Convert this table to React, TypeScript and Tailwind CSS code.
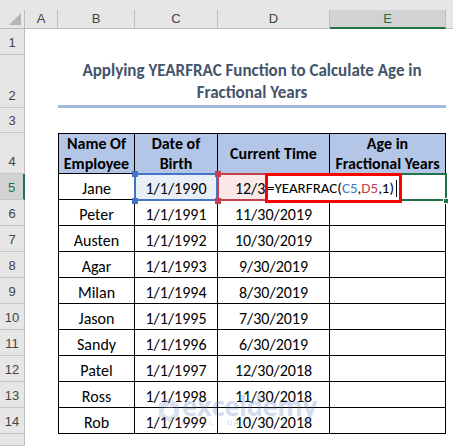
import React from 'react';

const people = [
  ['Jane', '1/1/1990', '12/30/2019'],
  ['Peter', '1/1/1991', '11/30/2019'],
  ['Austen', '1/1/1992', '10/30/2019'],
  ['Agar', '1/1/1993', '9/30/2019'],
  ['Milan', '1/1/1994', '8/30/2019'],
  ['Jason', '1/1/1995', '7/30/2019'],
  ['Sandy', '1/1/1996', '6/30/2019'],
  ['Patel', '1/1/1997', '12/30/2018'],
  ['Ross', '1/1/1998', '11/30/2018'],
  ['Rob', '1/1/1999', '10/30/2018'],
];

const letters = ['A', 'B', 'C', 'D', 'E'];

const RowHead = ({ n, active }: { n?: number; active?: boolean }) => (
  <div
    className={`flex items-end justify-center border-b border-[#c6c6c6] pb-[3px] text-[13px] leading-4 font-['Liberation_Sans',sans-serif] ${
      active
        ? 'bg-[#d2d2d2] text-[#217346] border-r-2 border-r-[#217346]'
        : 'bg-[#e6e6e6] text-[#444] border-r border-r-[#bdbdbd]'
    }`}
  >
    {n}
  </div>
);

const Blank = () => <div className="bg-white" />;

const Cell = ({
  children,
  first,
  top,
  className = '',
}: {
  children?: React.ReactNode;
  first?: boolean;
  top?: boolean;
  className?: string;
}) => (
  <div
    className={`flex items-end justify-center border-r border-b border-black whitespace-nowrap overflow-hidden leading-5 ${
      first ? 'border-l' : ''
    } ${top ? 'border-t' : ''} ${className}`}
  >
    {children}
  </div>
);

const Handle = ({ className }: { className: string }) => (
  <div className={`absolute w-[6px] h-[6px] ${className}`} />
);

export default function App() {
  return (
    <div className="relative w-[453px] h-[446px] overflow-hidden bg-white font-['Carlito','Calibri','Lato',sans-serif] text-[16px] text-black">
      <div className="h-[10px] bg-[#e6e6e6]" />
      <div className="grid grid-cols-[25px_33px_77px_83px_112px_116px_7px] grid-rows-[19px_26px_53px_25px_41px_repeat(10,26px)_12px]">
        {/* column headers */}
        <div className="relative bg-[#e6e6e6] border-r border-b border-[#bdbdbd]">
          <svg className="absolute right-[3px] bottom-[3px]" width="12" height="12" viewBox="0 0 12 12">
            <polygon points="12,0 12,12 0,12" fill="#b4b4b4" />
          </svg>
        </div>
        {letters.map((l) => (
          <div
            key={l}
            className={`flex items-center justify-center text-[13px] font-['Liberation_Sans',sans-serif] border-r border-[#bdbdbd] ${
              l === 'E'
                ? 'bg-[#d2d2d2] text-[#217346] border-b-2 border-b-[#217346]'
                : 'bg-[#e6e6e6] text-[#444] border-b border-b-[#bdbdbd]'
            }`}
          >
            {l}
          </div>
        ))}
        <div className="bg-[#e6e6e6] border-b border-[#bdbdbd]" />

        {/* row 1 */}
        <RowHead n={1} />
        <Blank />
        <Blank />
        <Blank />
        <Blank />
        <Blank />
        <Blank />

        {/* row 2 title */}
        <RowHead n={2} />
        <Blank />
        <div className="col-span-4 flex items-end justify-center border-b-[3px] border-[#a2b8e0] pb-px text-center text-[17px] leading-[22px] font-bold text-[#44546a]">
          <span>
            Applying YEARFRAC Function to Calculate Age in
            <br />
            Fractional Years
          </span>
        </div>
        <Blank />

        {/* row 3 */}
        <RowHead n={3} />
        <Blank />
        <Blank />
        <Blank />
        <Blank />
        <Blank />
        <Blank />

        {/* row 4 table header */}
        <RowHead n={4} />
        <Blank />
        {[
          ['Name Of', 'Employee'],
          ['Date of', 'Birth'],
          ['Current Time'],
          ['Age in', 'Fractional Years'],
        ].map((lines, i) => (
          <Cell key={i} first={i === 0} top className="!items-center bg-[#b4c6e7] font-bold text-center">
            <span>
              {lines.map((t, j) => (
                <span key={j} className="block">
                  {t}
                </span>
              ))}
            </span>
          </Cell>
        ))}
        <Blank />

        {/* rows 5-14 */}
        {people.map(([name, dob, cur], i) => (
          <React.Fragment key={name}>
            <RowHead n={i + 5} active={i === 0} />
            <Blank />
            <Cell first>{name}</Cell>
            <Cell className={i === 0 ? 'bg-[#e9eff9]' : ''}>{dob}</Cell>
            <Cell className={i === 0 ? 'bg-[#fbe9ea]' : ''}>{cur}</Cell>
            <Cell />
            <Blank />
          </React.Fragment>
        ))}

        {/* row 15 partial */}
        <RowHead />
        <Blank />
        <Blank />
        <Blank />
        <Blank />
        <Blank />
        <Blank />
      </div>

      {/* D5 reference highlight */}
      <div className="absolute left-[217px] top-[173px] w-[114px] h-[28px] border-2 border-[#c43e4e]" />
      {/* C5 reference highlight */}
      <div className="absolute left-[134px] top-[173px] w-[84px] h-[28px] border-2 border-[#4472c4]" />
      <Handle className="left-[132px] top-[171px] bg-[#4472c4]" />
      <Handle className="left-[132px] top-[198px] bg-[#4472c4]" />
      <Handle className="left-[215px] top-[171px] bg-[#c43e4e]" />
      <Handle className="left-[215px] top-[198px] bg-[#c43e4e]" />

      {/* active cell E5 */}
      <div className="absolute left-[329px] top-[173px] w-[118px] h-[28px] border-2 border-[#217346]" />
      <Handle className="left-[443px] top-[198px] bg-[#217346] border border-white" />

      {/* in-cell editor */}
      <div className="absolute left-[265px] top-[173px] w-[137px] h-[30px] border-[3px] border-[#ff0000] bg-white flex items-center text-[15px] leading-5 whitespace-nowrap">
        <span className="ml-[-1px]">
          =YEARFRAC(<span className="text-[#4472c4]">C5</span>,<span className="text-[#c43e4e]">D5</span>,1)
        </span>
        <span className="ml-[2px] w-px h-[17px] bg-black" />
      </div>

      {/* watermark */}
      <div className="pointer-events-none absolute left-[158px] top-[393px] flex items-center gap-[2px] opacity-25">
        <svg width="22" height="26" viewBox="0 0 22 26">
          <polygon points="11,1 21,7 21,19 11,25 1,19 1,7" fill="#6f8fc9" />
          <polygon points="11,8 16,11 16,17 11,20 6,17 6,11" fill="#ffffff" />
        </svg>
        <div className="flex flex-col leading-none">
          <span className="text-[26px] font-bold text-[#4f77c2] font-['Open_Sans',sans-serif] tracking-[-0.5px]">exceldemy</span>
          <span className="text-[7px] tracking-[2px] text-[#5b6b84] font-['Liberation_Sans',sans-serif]">EXCEL · DATA · BI</span>
        </div>
      </div>
    </div>
  );
}
